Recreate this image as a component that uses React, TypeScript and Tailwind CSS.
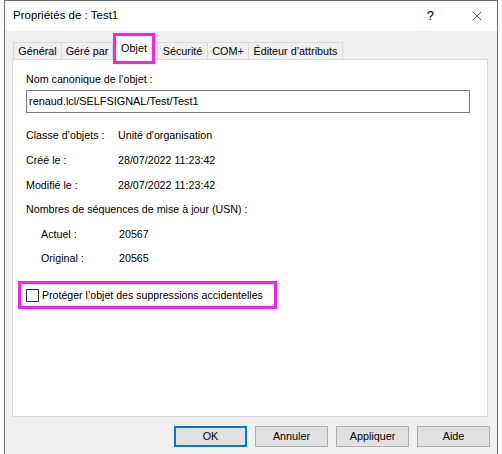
import { X } from 'lucide-react';

const font = "font-['Liberation_Sans',Arial,sans-serif]";

function Tab({ label, w, className = '' }: { label: string; w: string; className?: string }) {
  return (
    <div
      className={`${w} h-[17px] border border-b-0 border-[#d9d9d9] bg-[#f0f0f0] flex items-center justify-center text-[10.8px] leading-none text-black ${className}`}
    >
      {label}
    </div>
  );
}

function Row({ label, value, indent = false }: { label: string; value: string; indent?: boolean }) {
  return (
    <div className={`flex h-[14px] items-center text-[10.7px] leading-[14px] ${indent ? 'pl-[15px]' : ''}`}>
      <span className={indent ? 'w-[78px]' : 'w-[92px]'}>{label}</span>
      <span>{value}</span>
    </div>
  );
}

function Btn({ label, primary = false }: { label: string; primary?: boolean }) {
  return (
    <button
      className={`w-[73px] h-[21px] bg-[#e1e1e1] text-[10.8px] leading-none text-black flex items-center justify-center ${
        primary ? 'border-2 border-[#0078d7]' : 'border border-[#adadad]'
      }`}
    >
      {label}
    </button>
  );
}

export default function App() {
  return (
    <div className={`w-[502px] h-[454px] bg-white overflow-hidden ${font}`}>
      <div className="ml-[4px] w-[494px] h-full border-x border-t border-[#6e6e6e] flex flex-col">
        {/* title bar */}
        <div className="h-[30px] flex items-center bg-white pl-[8px] pr-[12px] text-black">
          <span className="text-[11.5px]">Propriétés de : Test1</span>
          <span className="ml-auto text-[13px] mr-[35px]">?</span>
          <X size={16} strokeWidth={1} className="text-black" />
        </div>

        {/* body */}
        <div className="flex-1 bg-[#f0f0f0] pl-[7px] pr-[7px] pt-[2px] text-black">
          <div className="flex items-end pl-[1px]">
            <Tab label="Général" w="w-[49px]" />
            <Tab label="Géré par" w="w-[52px]" className="-ml-px" />
            <div className="relative z-10 -mb-[5px] w-[42px] h-[31px] border-[3px] border-[#ff1cf5] bg-white flex items-center justify-center text-[10.8px] leading-none">
              Objet
            </div>
            <Tab label="Sécurité" w="w-[51px]" className="ml-[2px]" />
            <Tab label="COM+" w="w-[42px]" className="-ml-px" />
            <Tab label="Éditeur d’attributs" w="w-[95px]" className="-ml-px" />
          </div>

          <div className="w-[476px] h-[358px] border border-[#d9d9d9] bg-white pl-[13px] pt-[12px]">
            <div className="h-[14px] text-[10.7px] leading-[14px]">Nom canonique de l’objet :</div>
            <div className="mt-[4px] w-[444px] h-[23px] border border-[#7a7a7a] px-[2px] flex items-center text-[10.9px]">
              renaud.lcl/SELFSIGNAL/Test/Test1
            </div>

            <div className="mt-[15px] flex flex-col">
              <Row label="Classe d’objets :" value="Unité d'organisation" />
              <div className="mt-[11px]">
                <Row label="Créé le :" value="28/07/2022 11:23:42" />
              </div>
              <div className="mt-[11px]">
                <Row label="Modifié le :" value="28/07/2022 11:23:42" />
              </div>
              <div className="mt-[10px] h-[14px] text-[10.7px] leading-[14px]">
                Nombres de séquences de mise à jour (USN) :
              </div>
              <div className="mt-[11px]">
                <Row label="Actuel :" value="20567" indent />
              </div>
              <div className="mt-[10px]">
                <Row label="Original :" value="20565" indent />
              </div>
            </div>

            <div className="mt-[16px] -ml-[8px] w-[259px] h-[28px] border-[3px] border-[#ff1cf5] flex items-center pl-[5px]">
              <div className="w-[13px] h-[13px] border border-[#333333] bg-white" />
              <span className="ml-[3px] text-[10.6px] leading-none">
                Protéger l’objet des suppressions accidentelles
              </span>
            </div>
          </div>

          <div className="mt-[9px] flex justify-end gap-[8px]">
            <Btn label="OK" primary />
            <Btn label="Annuler" />
            <Btn label="Appliquer" />
            <Btn label="Aide" />
          </div>
        </div>
      </div>
    </div>
  );
}
